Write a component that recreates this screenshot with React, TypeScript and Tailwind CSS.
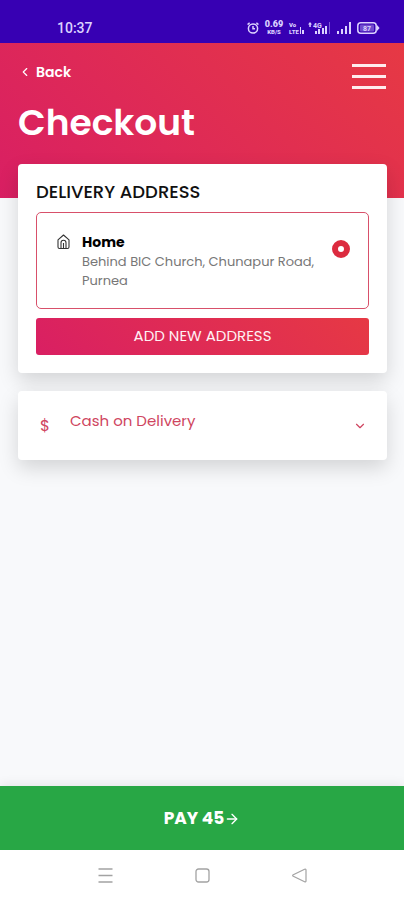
import { ArrowRight, ChevronDown, ChevronLeft } from 'lucide-react';

const SignalBars = () => (
  <svg className="w-4 h-3" viewBox="0 0 16 12" fill="currentColor" aria-hidden="true">
    <rect x="1" y="9" width="2" height="3" />
    <rect x="5" y="7" width="2" height="5" />
    <rect x="9" y="4" width="2" height="8" />
    <rect x="13" y="0" width="2" height="12" />
  </svg>
);

const StatusBar = () => (
  <div className="h-[43px] bg-[#3700b3] text-[#dcd2ff] flex items-center justify-between pl-[57px] pr-6 pt-3 shrink-0 font-['Roboto',sans-serif]">
    <span className="text-sm leading-4 font-medium">10:37</span>
    <div className="flex items-center">
      <svg className="w-3 h-3" viewBox="0 0 12 12" fill="none" stroke="currentColor" strokeWidth="1.5" aria-hidden="true">
        <circle cx="6" cy="6.5" r="4.6" />
        <path d="M6 4v2.8h2M.6 2.6l2-1.8M11.4 2.6l-2-1.8" />
      </svg>
      <div className="ml-[6px] w-[18px] flex flex-col items-center font-black">
        <span className="text-[9px] leading-[8px]">0.69</span>
        <span className="text-[6px] leading-[7px]">KB/S</span>
      </div>
      <div className="ml-[6px] w-[15px] flex items-end gap-px">
        <div className="flex flex-col font-black text-[6px] leading-[7px]">
          <span>Vo</span>
          <span>LTE</span>
        </div>
        <svg className="w-1 h-3 shrink-0" viewBox="0 0 4 12" fill="currentColor" aria-hidden="true">
          <rect x="0" y="4" width="1" height="7" />
          <rect x="2" y="7" width="2" height="4" />
        </svg>
      </div>
      <svg className="ml-1 w-[22px] h-3" viewBox="0 0 22 12" fill="currentColor" aria-hidden="true">
        <path d="M2 0L4 2.5H2.8V5H1.3V2.5H0z" />
        <text x="5" y="6" fontSize="7" fontWeight="700">4G</text>
        <rect x="7" y="9" width="2" height="3" />
        <rect x="10" y="7" width="2" height="5" />
        <rect x="14" y="6" width="2" height="6" />
        <rect x="17" y="4" width="2" height="8" />
        <rect x="21" y="0" width="1" height="12" opacity="0.4" />
      </svg>
      <span className="ml-[6px]"><SignalBars /></span>
      <svg className="ml-[5px] w-[23px] h-3" viewBox="0 0 23 12" fill="none" aria-hidden="true">
        <rect x="0.8" y="0.8" width="18.4" height="10.4" rx="3" stroke="currentColor" strokeWidth="1.5" />
        <path d="M20 3l2.6 3L20 9z" fill="currentColor" />
        <rect x="3" y="2.5" width="14" height="7" rx="1" fill="currentColor" opacity="0.35" />
        <text x="6" y="8.6" fontSize="7" fontWeight="700" fill="currentColor">87</text>
      </svg>
    </div>
  </div>
);

const Header = () => (
  <header className="h-[155px] bg-[linear-gradient(45deg,#d91f63,#e63944)] text-white px-[18px] pt-5 shrink-0">
    <div className="flex items-start justify-between">
      <div>
        <a href="#back" className="flex items-center text-sm leading-[18px] font-semibold">
          <ChevronLeft className="w-[14px] h-[14px] mr-1" />
          Back
        </a>
        <h1 className="mt-[18px] text-4xl leading-[48px] font-semibold">Checkout</h1>
      </div>
      <button type="button" aria-label="Menu" className="mt-px flex flex-col gap-2">
        <span className="block w-[34px] h-[3px] bg-[#ffecee]" />
        <span className="block w-[34px] h-[3px] bg-[#ffecee]" />
        <span className="block w-[34px] h-[3px] bg-[#ffecee]" />
      </button>
    </div>
  </header>
);

const AddressCard = () => (
  <section className="bg-white rounded shadow-[0_8px_20px_rgba(0,0,0,0.15)] px-[18px] pt-[18px] pb-[18px]">
    <h2 className="text-lg leading-5 font-medium text-[#111111]">DELIVERY ADDRESS</h2>
    <label htmlFor="home" className="mt-[10px] h-[97px] flex items-start border border-[#d8506a] rounded-[5px] pl-5 pr-[18px] pt-5">
      <svg className="mt-px w-[13px] h-4 shrink-0" viewBox="0 0 13 16" fill="none" stroke="#333333" strokeWidth="1.1" strokeLinejoin="round" aria-hidden="true">
        <path d="M1 5.8L6.5 1 12 5.8V13a1.5 1.5 0 0 1-1.5 1.5h-8A1.5 1.5 0 0 1 1 13z" />
        <path d="M4 14.5V8.8a2.5 2.5 0 0 1 5 0v5.7M6.5 14.5V9" />
      </svg>
      <span className="ml-3 flex-1">
        <span className="block text-sm leading-[18px] font-bold text-black">Home</span>
        <span className="block mt-px text-[13px] leading-[19px] text-[#777777]">
          Behind BIC Church, Chunapur Road, Purnea
        </span>
      </span>
      <input
        id="home"
        type="radio"
        name="address"
        defaultChecked
        className="mt-[7px] w-[18px] h-[18px] shrink-0 appearance-none rounded-full border-[6px] border-[#dc2b3f] bg-white"
      />
    </label>
    <button
      type="button"
      className="mt-[9px] w-full h-[37px] rounded-[3px] bg-[linear-gradient(45deg,#d91f63,#e63944)] text-[15px] leading-5 pb-px text-[#fff0f3]"
    >
      ADD NEW ADDRESS
    </button>
  </section>
);

const PaymentMethod = () => (
  <button
    type="button"
    className="mt-[18px] w-full h-[69px] flex items-center bg-white rounded shadow-[0_8px_20px_rgba(0,0,0,0.15)] pl-[22px] pr-5 text-[#cf4560]"
  >
    <span className="w-[30px] text-left text-base leading-5">$</span>
    <span className="flex-1 text-left text-[15px] leading-5 pb-[10px]">Cash on Delivery</span>
    <ChevronDown className="w-[14px] h-[14px]" />
  </button>
);

const SystemNav = () => (
  <nav className="h-[50px] bg-white flex items-center justify-center gap-[82px] text-[#a3a3a3]">
    <button type="button" aria-label="Recent apps">
      <svg className="w-[15px] h-[15px]" viewBox="0 0 15 15" fill="none" stroke="currentColor" strokeWidth="1.3">
        <path d="M.5 1h14M.5 7.5h14M.5 14h14" />
      </svg>
    </button>
    <button type="button" aria-label="Home screen">
      <svg className="w-[15px] h-[15px]" viewBox="0 0 15 15" fill="none" stroke="currentColor" strokeWidth="1.3">
        <rect x="1" y="1" width="13" height="13" rx="2.5" />
      </svg>
    </button>
    <button type="button" aria-label="Previous screen">
      <svg className="w-[15px] h-[15px]" viewBox="0 0 15 15" fill="none" stroke="currentColor" strokeWidth="1.2" strokeLinejoin="round">
        <path d="M1.3 6.8L12.6 1.2Q14 .7 14 2v11q0 1.3-1.4.8L1.3 8.2Q0 7.5 1.3 6.8z" />
      </svg>
    </button>
  </nav>
);

const App = () => {
  return (
    <div className="min-h-screen flex flex-col bg-[#f8f9fb] font-['Poppins','Inter',sans-serif]">
      <StatusBar />
      <Header />
      <main className="flex-1 pl-[18px] pr-[17px] -mt-[34px]">
        <AddressCard />
        <PaymentMethod />
      </main>
      <footer>
        <button
          type="button"
          className="w-full h-16 pt-px flex items-center justify-center bg-[#28a745] text-white text-[17px] font-bold shadow-[0_-2px_10px_rgba(0,0,0,0.08)]"
        >
          PAY 45
          <ArrowRight className="w-4 h-4" />
        </button>
        <SystemNav />
      </footer>
    </div>
  );
};

export default App;
